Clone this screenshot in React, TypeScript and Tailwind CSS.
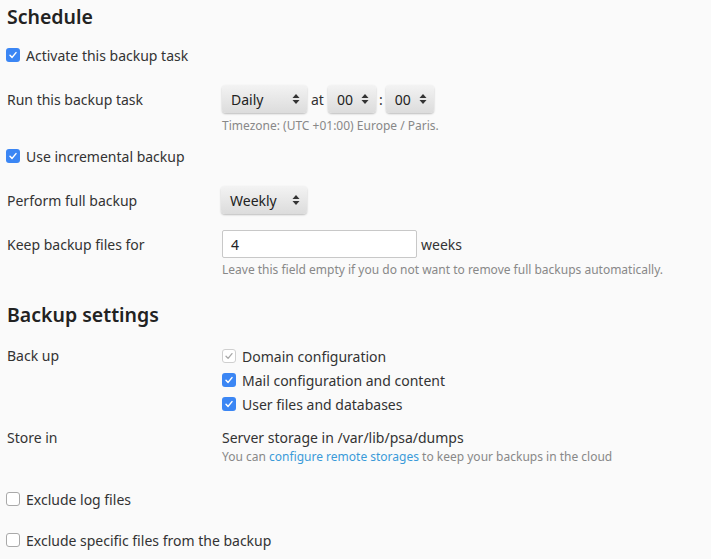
import React from "react";

function Check({ state }: { state: "on" | "off" | "disabled" }) {
  if (state === "on") {
    return (
      <span className="w-[14px] h-[14px] rounded-[3px] bg-[#3b86f4] flex items-center justify-center shrink-0">
        <svg width="10" height="10" viewBox="0 0 10 10">
          <path d="M2 5.2 L4.1 7.4 L8 2.6" fill="none" stroke="white" strokeWidth="1.5" strokeLinecap="round" strokeLinejoin="round" />
        </svg>
      </span>
    );
  }
  if (state === "disabled") {
    return (
      <span className="w-[14px] h-[14px] rounded-[3px] bg-white border border-[#cfcfcf] flex items-center justify-center shrink-0">
        <svg width="10" height="10" viewBox="0 0 10 10">
          <path d="M2 5.2 L4.1 7.4 L8 2.6" fill="none" stroke="#a8a8a8" strokeWidth="1.3" strokeLinecap="round" strokeLinejoin="round" />
        </svg>
      </span>
    );
  }
  return <span className="w-[14px] h-[14px] rounded-[3px] bg-white border border-[#a9a9a9] shrink-0" />;
}

function Select({ value, width }: { value: string; width: string }) {
  return (
    <div
      className={`${width} h-[28px] rounded-[4px] bg-gradient-to-b from-[#f3f3f3] to-[#dcdcdc] shadow-[0_1px_2px_rgba(0,0,0,0.25)] flex items-center justify-between pl-[9px] pr-[7px] text-[14px] text-[#222]`}
    >
      <span>{value}</span>
      <svg width="8" height="12" viewBox="0 0 8 12">
        <path d="M4 1 L7.5 5 L0.5 5 Z" fill="#333" />
        <path d="M4 11 L7.5 7 L0.5 7 Z" fill="#333" />
      </svg>
    </div>
  );
}

export default function App() {
  return (
    <div
      className="w-[711px] h-[559px] overflow-hidden bg-[#fafafa] px-[7px] text-[14px] text-[#333]"
      style={{ fontFamily: '"Noto Sans", "Open Sans", sans-serif' }}
    >
      <h2 className="mt-[5px] h-[24px] leading-[24px] text-[19.5px] font-semibold text-[#222]">Schedule</h2>

      <div className="mt-[16px] h-[20px] flex items-center gap-[6px] -ml-[1px]">
        <Check state="on" />
        <span>Activate this backup task</span>
      </div>

      <div className="mt-[20px] h-[28px] flex items-center">
        <div className="w-[215px]">Run this backup task</div>
        <Select value="Daily" width="w-[85px]" />
        <span className="mx-[4px]">at</span>
        <Select value="00" width="w-[48px]" />
        <span className="mx-[3px]">:</span>
        <Select value="00" width="w-[48px]" />
      </div>

      <div className="mt-[5px] h-[16px] leading-[16px] pl-[215px] text-[12px] text-[#888]">
        Timezone: (UTC +01:00) Europe / Paris.
      </div>

      <div className="mt-[12px] h-[20px] flex items-center gap-[6px] -ml-[1px]">
        <Check state="on" />
        <span>Use incremental backup</span>
      </div>

      <div className="mt-[20px] h-[28px] flex items-center">
        <div className="w-[214px]">Perform full backup</div>
        <Select value="Weekly" width="w-[86px]" />
      </div>

      <div className="mt-[16px] h-[28px] flex items-center">
        <div className="w-[215px]">Keep backup files for</div>
        <div className="w-[195px] h-[28px] bg-white border border-[#c8c8c8] rounded-[2px] flex items-center px-[8px] text-[#222]">
          4
        </div>
        <span className="ml-[4px]">weeks</span>
      </div>

      <div className="mt-[4px] h-[16px] leading-[16px] pl-[215px] text-[12px] text-[#888]">
        Leave this field empty if you do not want to remove full backups automatically.
      </div>

      <h2 className="mt-[25px] h-[24px] leading-[24px] text-[19.5px] font-semibold text-[#222]">Backup settings</h2>

      <div className="mt-[19px] flex">
        <div className="w-[215px] h-[20px] leading-[20px]">Back up</div>
        <div className="flex flex-col gap-[4px]">
          <div className="h-[20px] flex items-center gap-[6px]">
            <Check state="disabled" />
            <span>Domain configuration</span>
          </div>
          <div className="h-[20px] flex items-center gap-[6px]">
            <Check state="on" />
            <span>Mail configuration and content</span>
          </div>
          <div className="h-[20px] flex items-center gap-[6px]">
            <Check state="on" />
            <span>User files and databases</span>
          </div>
        </div>
      </div>

      <div className="mt-[14px] flex">
        <div className="w-[215px] h-[20px] leading-[20px]">Store in</div>
        <div className="flex flex-col">
          <div className="h-[20px] leading-[20px]">Server storage in /var/lib/psa/dumps</div>
          <div className="mt-[1px] h-[16px] leading-[16px] text-[12px] text-[#888]">
            You can <span className="text-[#3a9ad9]">configure remote storages</span> to keep your backups in the cloud
          </div>
        </div>
      </div>

      <div className="mt-[24px] h-[20px] flex items-center gap-[6px] -ml-[1px]">
        <Check state="off" />
        <span>Exclude log files</span>
      </div>

      <div className="mt-[21px] h-[20px] flex items-center gap-[6px] -ml-[1px]">
        <Check state="off" />
        <span>Exclude specific files from the backup</span>
      </div>
    </div>
  );
}
